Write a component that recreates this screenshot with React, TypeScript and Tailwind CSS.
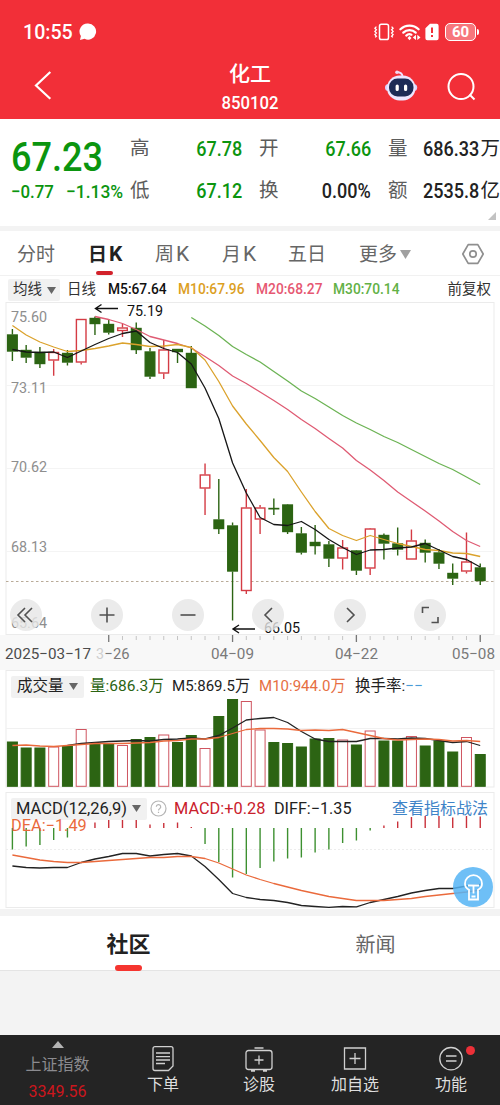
import React from 'react';

type Candle = [top: number, bottom: number, high: number, low: number, up: 0 | 1];

// Plot coordinates share one vertical space across the three panels
const STEP = 13.76;
const X0 = 12.4;
const xAt = (i: number) => X0 + i * STEP;

const candles: Candle[] = [
    [334.5, 351.5, 329, 361, 0], [350, 357.5, 345, 363, 0], [352, 364, 347, 368, 0], [352, 360.5, 349, 375.7, 1],
    [353, 362.5, 350, 365.5, 0], [319, 362.5, 319, 364.5, 1], [318, 324, 316.5, 335, 0], [324, 332.5, 319, 334.5, 0],
    [327.5, 331, 324, 337, 1], [328, 350, 322.5, 354, 0], [351.5, 376.5, 348, 379, 0], [349.5, 373.5, 340, 379, 1],
    [349, 352, 349, 363, 0], [353, 388, 346, 388, 0], [474.5, 488.5, 463.5, 515, 1], [519.5, 529, 479, 534, 0],
    [525.5, 571.5, 522.5, 620.5, 0], [507.5, 591, 489, 594, 1], [507.5, 519.5, 505, 534, 1], [508, 509, 498.5, 515, 0],
    [504.5, 532, 504, 534, 0], [533.5, 552.5, 527, 554.5, 0], [542, 546, 525, 554.5, 0], [544.5, 558.5, 541, 567, 0],
    [547.5, 558.5, 540, 569.5, 1], [550.5, 570.5, 550, 575, 0], [528.5, 568.5, 528, 575, 1], [535, 543.5, 533.5, 559.5, 0],
    [543.5, 549.5, 527.5, 555.5, 0], [540.5, 559.5, 529.5, 559.5, 1], [543, 552.5, 539.5, 562.5, 0], [552.5, 563.5, 549, 569, 0],
    [573, 578.5, 563.5, 585, 0], [561.5, 571.5, 532.5, 573.5, 1], [567.5, 581, 563.5, 585, 0],
];

const ma5 = [349.5, 352, 352.5, 352, 357.5, 351, 344.5, 338.5, 333.5, 331, 342.5, 348.5, 352.5, 364, 388, 418.5, 463, 493, 517.5, 524.5, 525.5, 521.5, 529.5, 539.5, 547.5, 554.5, 550, 549.5, 548, 547, 543.5, 550, 556.5, 559.5, 567];
const ma10 = [325.5, 335, 342, 347, 351.5, 350.5, 348.5, 346, 343, 344.5, 346.5, 346, 344.5, 347.5, 360, 381.5, 406, 424, 440.5, 457.5, 471.5, 492, 511.5, 528.5, 535.5, 540.5, 535.5, 539.5, 543.5, 546.5, 549.5, 550.5, 553, 553.5, 556.5];
const ma20 = [316.5, 319.5, 323.5, 329.5, 336.5, 340, 343.5, 348, 356.5, 365.5, 376, 383.5, 392, 400.5, 409.5, 419.5, 428.5, 438.5, 448, 460.5, 470, 480.5, 492, 501.5, 511, 521, 531.5, 540.5, 546.5];
const ma30 = [317.5, 326, 335.5, 346.5, 354.5, 362, 371.5, 381, 391, 398.5, 407, 415.5, 423, 429.5, 436.5, 442.5, 449.5, 456.5, 463.5, 469.5, 477, 484.5];

const volumes = [741.5, 747.5, 747.5, 746.5, 746, 729, 744, 744, 745, 739, 737, 734.5, 742, 735, 748, 716, 699, 701, 729.5, 742, 743, 746.5, 738.5, 738, 739.5, 744.5, 730.5, 740.5, 740.5, 736, 745.5, 740.5, 751.5, 737, 754];
const volMa5 = [745.5, 743.5, 742.5, 741.5, 741, 740.5, 741, 739.5, 739, 738, 739, 735.5, 728, 720, 718.5, 717.5, 722.5, 731.5, 739, 741.5, 741.5, 741.5, 738.5, 738.5, 739, 738, 738.5, 740.5, 742.5, 741.5, 745.5];
const volMa10 = [745.5, 745, 746, 746.5, 745.5, 744.5, 743.5, 743.5, 743.5, 743, 742.5, 741, 740.5, 739, 739, 737.5, 733.5, 729.5, 728.5, 728.5, 729, 730.5, 730, 730.5, 729.5, 732.5, 735.5, 738.5, 740, 739.5, 739, 739.5, 741, 740.5, 741.5];

const macd = [849.5, 846.5, 845, 840, 837.5, 828, 822.5, 819.5, 818, 819, 824.5, 823, 822.5, 827, 844, 862, 877.5, 874, 868, 861.5, 858.5, 857.5, 852.5, 849.5, 843, 840.5, 830.5, 825.5, 821.5, 817, 816, 816, 817.5, 816, 816.5];
const diff = [866, 867.5, 868, 867.5, 867.5, 862.5, 859, 856.5, 853.5, 853.5, 856, 854.5, 853.5, 856, 866.5, 879.5, 893.5, 897.5, 899.5, 900.5, 902.5, 905.5, 906.5, 907.3, 906.5, 906.8, 902.5, 899.5, 896.5, 893, 890.5, 888.5, 888.5, 886, 884.5];
const dea = [855, 857.5, 860, 861.5, 862.5, 862.5, 861.5, 860.5, 859.5, 858.5, 857.5, 857.5, 856.5, 856.5, 858.5, 863, 869, 875, 879.5, 883.5, 887, 890.5, 893.5, 896.5, 898.5, 900.5, 900.5, 900.5, 899.5, 898.5, 896.5, 895, 893.5, 892, 890];

const Line = ({ data, start = 0, color }: { data: number[]; start?: number; color: string }) => (
    <polyline
        points={data.map((y, i) => `${xAt(i + start).toFixed(1)},${y}`).join(' ')}
        fill="none"
        stroke={color}
        strokeWidth="1.3"
        strokeLinejoin="round"
    />
);

const Label = ({ x, y, w, size = 15.5, fill = '#8e8e8e', children }: { x: number; y: number; w: number; size?: number; fill?: string; children: string }) => (
    <text x={x} y={y} fontSize={size} fill={fill} textLength={w} lengthAdjust="spacingAndGlyphs">{children}</text>
);

function StatusBar() {
    return (
        <div className="flex h-[64px] items-center pl-[23px] pr-[21px]">
            <span className="w-[56px] origin-left scale-x-[.98] text-[20px] font-medium leading-none">10:55</span>
            <svg width="18" height="18" viewBox="0 0 18 18" fill="#fff">
                <path d="M9 .6a8 8 0 1 1-3.4 15.2L1 17l.9-4A8 8 0 0 1 9 .6Z" />
            </svg>
            <div className="ml-auto flex items-center">
                <svg width="20" height="18" viewBox="0 0 20 18" fill="none" stroke="#fff" strokeWidth="1.5">
                    <rect x="5.5" y="1.2" width="9" height="15.4" rx="1.8" />
                    <path d="M2.4 3.6 .9 5.2l1.5 1.6L.9 8.4l1.5 1.6L.9 11.6l1.5 1.6-1.2 1.2M17.6 3.6l1.5 1.6-1.5 1.6 1.5 1.6-1.5 1.6 1.5 1.6-1.5 1.6 1.2 1.2" strokeWidth="1.3" />
                </svg>
                <svg className="ml-[5px]" width="22" height="18" viewBox="0 0 22 18" fill="none" stroke="#fff" strokeWidth="2.2" strokeLinecap="round">
                    <path d="M1.4 6.3a13 13 0 0 1 18.2 0M4.3 9.6a8.8 8.8 0 0 1 12.4 0M7.3 12.6a4.6 4.6 0 0 1 5.1-.9" />
                    <path d="m10.5 13 2 2-2 2.2-2-2.2ZM17 11.8v5.2l-3.2-2.6ZM18.3 17v-5.2l3.2 2.6Z" fill="#fff" stroke="none" />
                </svg>
                <svg className="ml-[4px]" width="14" height="18" viewBox="0 0 14 18">
                    <path d="M5 .8h6.5a2 2 0 0 1 2.1 2v12.4a2 2 0 0 1-2.1 2h-9a2 2 0 0 1-2.1-2V5.3Z" fill="#fff" />
                    <path d="M7 4.5v5.5M7 12v2" stroke="#f22f38" strokeWidth="2" />
                </svg>
                <div className="ml-[6px] flex h-[18px] w-[31px] items-center justify-center rounded-[5px] border-[1.5px] border-white bg-[#f7767c]">
                    <span className="text-[15px] font-bold leading-none">60</span>
                </div>
                <div className="ml-[1px] h-[6px] w-[2px] rounded-r bg-white" />
            </div>
        </div>
    );
}

function Header() {
    return (
        <header className="h-[119px] bg-[#f22f38] text-white">
            <StatusBar />
            <div className="flex h-[55px] items-start pl-[33px] pr-[24px]">
                <svg className="mt-[6px]" width="20" height="30" viewBox="0 0 20 30" fill="none" stroke="#fff" strokeWidth="2.2">
                    <path d="M17.3 2 3 15.5 17.3 28.8" />
                </svg>
                <div className="ml-[147px] w-[100px] text-center">
                    <div className="text-[21px] font-medium leading-[20px]">化工</div>
                    <div className="mt-[9px] origin-center scale-x-[.88] text-[19px] font-medium leading-[20px]">850102</div>
                </div>
                <svg className="ml-[83px] mt-[5px]" width="36" height="32" viewBox="0 0 36 32">
                    <path d="M19.5 7.5C19.5 5 17.5 3.5 14.5 3" stroke="#efe0ff" strokeWidth="1.8" strokeLinecap="round" fill="none" />
                    <circle cx="14" cy="3.2" r="1.8" fill="#f3d8f0" />
                    <circle cx="5.5" cy="18.5" r="3.5" fill="#d9d2ff" />
                    <circle cx="30.7" cy="18.5" r="3.5" fill="#d9d2ff" />
                    <rect x="4" y="6.5" width="28.5" height="25" rx="12.5" fill="#ece6ff" />
                    <rect x="6" y="9.5" width="24.5" height="18" rx="8.5" fill="#1d2b56" />
                    <path d="M14.2 17v3.5M22.6 17v3.5" stroke="#fff" strokeWidth="3.2" strokeLinecap="round" />
                </svg>
                <svg className="ml-auto mt-[8px]" width="30" height="30" viewBox="0 0 30 30" fill="none" stroke="#fff" strokeWidth="2">
                    <circle cx="15" cy="14.5" r="12.5" />
                    <path d="m23.5 22.5 5 5" />
                </svg>
            </div>
        </header>
    );
}

const quotes = [
    { label: '高', value: '67.78', green: true },
    { label: '开', value: '67.66', green: true },
    { label: '低', value: '67.12', green: true },
    { label: '换', value: '0.00%', green: false },
];

const totals = [
    { label: '量', value: '686.33', unit: '万' },
    { label: '额', value: '2535.8', unit: '亿' },
];

function Quote() {
    return (
        <section className="relative flex h-[107px] bg-white pt-[9px]">
            <div className="w-[130px] pl-[11px] text-[#0b950f]">
                <div className="origin-left scale-x-[.88] pt-[9px] text-[41px] font-medium leading-[41px]">67.23</div>
                <div className="flex whitespace-nowrap pt-[4px] text-[18.5px] font-medium leading-[20px]">
                    <span className="w-[55px] origin-left scale-x-[.91]">−0.77</span>
                    <span className="origin-left scale-x-[.94]">−1.13%</span>
                </div>
            </div>
            <div className="grid w-[258px] grid-cols-[129px_129px] content-start">
                {quotes.map(q => (
                    <div key={q.label} className="flex h-[42px] items-center pr-[17px]">
                        <span className="text-[19.5px] leading-none text-[#5c5c5c]">{q.label}</span>
                        <span className={`ml-auto origin-right scale-x-[.88] text-[20.5px] font-medium leading-none ${q.green ? 'text-[#0b950f]' : 'text-[#222]'}`}>{q.value}</span>
                    </div>
                ))}
            </div>
            <div>
                {totals.map(t => (
                    <div key={t.label} className="flex h-[42px] w-[112px] items-center">
                        <span className="w-[36px] text-[19.5px] leading-none text-[#5c5c5c]">{t.label}</span>
                        <span className="w-[57px] origin-left scale-x-[.88] text-[20.5px] font-medium leading-none text-[#222]">{t.value}</span>
                        <span className="text-[19.5px] leading-none text-[#222]">{t.unit}</span>
                    </div>
                ))}
            </div>
            <svg className="absolute bottom-[6px] right-[4px]" width="8" height="8" viewBox="0 0 8 8">
                <path d="M8 0v8H0Z" fill="#c2c2c2" />
            </svg>
        </section>
    );
}

function PeriodTabs() {
    return (
        <nav className="flex h-[44px] items-center bg-white pl-[17px] pt-[2px] text-[19px] leading-none text-[#666]">
            <span className="w-[71px]">分时</span>
            <span className="relative flex h-full w-[67px] items-center gap-[2px] font-bold text-[#222]">
                日<span className="text-[21px]">K</span>
                <span className="absolute bottom-0 left-[8px] h-[4px] w-[17px] rounded-full bg-[#d2222b]" />
            </span>
            <span className="flex w-[67px] items-center gap-[2px]">周<span className="text-[21px]">K</span></span>
            <span className="flex w-[66px] items-center gap-[2px]">月<span className="text-[21px]">K</span></span>
            <span className="w-[71px]">五日</span>
            <span className="flex items-center gap-[3px]">
                更多
                <svg width="11" height="9" viewBox="0 0 11 9"><path d="M0 0h11L5.5 9Z" fill="#a0a0a0" /></svg>
            </span>
            <svg className="ml-auto mr-[16px]" width="22" height="22" viewBox="0 0 22 22" fill="none" stroke="#8f8f8f" strokeWidth="1.7">
                <path d="M6.2 1.6h9.6L21.2 11l-5.4 9.4H6.2L.8 11Z" strokeLinejoin="round" />
                <circle cx="11" cy="11" r="3.2" />
            </svg>
        </nav>
    );
}

function Caret() {
    return <svg width="9" height="7" viewBox="0 0 9 7"><path d="M0 0h9L4.5 7Z" fill="#666" /></svg>;
}

function AverageRow() {
    return (
        <div className="flex h-[27px] items-center whitespace-nowrap border-t border-[#f1f1f1] bg-white pl-[8px] pt-[2px] text-[14.5px] leading-none text-[#333]">
            <div className="flex h-[22px] w-[52px] items-center gap-[5px] rounded-[2px] bg-[#f1f1f1] pl-[5px]">均线<Caret /></div>
            <span className="ml-[7px] w-[41px]">日线</span>
            <span className="w-[70px] origin-left scale-x-[.95] font-medium text-[#111]">M5:67.64</span>
            <span className="w-[78px] origin-left scale-x-[.95] font-medium text-[#dca01f]">M10:67.96</span>
            <span className="w-[77px] origin-left scale-x-[.95] font-medium text-[#e65872]">M20:68.27</span>
            <span className="origin-left scale-x-[.95] font-medium text-[#62b146]">M30:70.14</span>
            <span className="ml-auto mr-[9px]">前复权</span>
        </div>
    );
}

const roundButtons = [
    { left: 'left-[10px]', d: 'M15 9 8 16l7 7M22 9l-7 7 7 7' },
    { left: 'left-[91px]', d: 'M16 8.5v15M8.5 16h15' },
    { left: 'left-[172px]', d: 'M8.5 16h15' },
    { left: 'left-[252px]', d: 'M20 9l-7 7 7 7' },
    { left: 'left-[334px]', d: 'M13 9l7 7-7 7' },
    { left: 'left-[414px]', d: 'M8.5 14V8.5H15M17.5 23.5H24V18' },
];

function PriceChart() {
    return (
        <div className="relative h-[368px]">
            <svg width="500" height="368" viewBox="0 302 500 368" fontFamily="Roboto">
                <rect x="0" y="302" width="500" height="333" fill="#fff" />
                <rect x="0" y="635" width="500" height="35" fill="#f8f8f8" />
                <rect x="6" y="302.5" width="488" height="332" fill="none" stroke="#ebebeb" />
                <path d="M6 385.5H494M6 468.5H494M6 551.5H494" stroke="#f4f4f4" />
                <path d="M6 581.5H494" stroke="#b9ab98" strokeDasharray="2.5 2.5" />
                <Label x={11} y={321.5} w={36}>75.60</Label>
                <Label x={11} y={392.5} w={36}>73.11</Label>
                <Label x={11} y={472} w={36}>70.62</Label>
                <Label x={11} y={551.5} w={36}>68.13</Label>
                <Label x={11} y={627.5} w={36}>65.64</Label>
                {candles.map(([top, bottom, high, low, up], i) => {
                    const x = xAt(i);
                    const color = up ? '#d43b44' : '#2c6413';
                    return (
                        <g key={i} stroke={color} strokeWidth="1.4">
                            <path d={`M${x} ${high}V${top}M${x} ${bottom}V${low}`} />
                            <rect x={x - 4.8} y={top + 0.5} width="9.6" height={Math.max(bottom - top - 1, 0.3)} fill={up ? '#fff' : color} />
                        </g>
                    );
                })}
                <Line data={ma30} start={13} color="#6cb354" />
                <Line data={ma20} start={6} color="#df5b73" />
                <Line data={ma10} color="#dba22c" />
                <Line data={ma5} color="#161616" />
                <path d="M118 308.5H95.5M101.5 304.5 95.5 308.5 101.5 312.5M255 629H233M239 625 233 629 239 633" stroke="#111" strokeWidth="1.4" fill="none" />
                <Label x={127} y={316} w={36} size={14} fill="#111">75.19</Label>
                <Label x={264} y={632.5} w={36} size={14} fill="#111">66.05</Label>
                {candles.map((_, i) => i > 7 && <path key={i} d={`M${xAt(i)} 636v4`} stroke="#c4c4c4" />)}
                {[7, 16, 25, 34].map(i => <path key={i} d={`M${xAt(i)} 635v7`} stroke="#777" strokeWidth="1.3" />)}
                <Label x={5} y={658.5} w={86} fill="#4c4c4c">2025−03−17</Label>
                <Label x={96} y={658.5} w={8} fill="#cfcfcf">3</Label>
                <Label x={104.5} y={658.5} w={25} fill="#7a7a7a">−26</Label>
                <Label x={211} y={658.5} w={43} fill="#7a7a7a">04−09</Label>
                <Label x={335} y={658.5} w={43} fill="#7a7a7a">04−22</Label>
                <Label x={452} y={658.5} w={43} fill="#7a7a7a">05−08</Label>
            </svg>
            {roundButtons.map(b => (
                <button key={b.left} className={`absolute top-[297px] h-[32px] w-[32px] rounded-full bg-[#e6e6e6]/80 ${b.left}`}>
                    <svg width="32" height="32" viewBox="0 0 32 32" fill="none" stroke="#505050" strokeWidth="1.6"><path d={b.d} /></svg>
                </button>
            ))}
        </div>
    );
}

function VolumePanel() {
    return (
        <div className="relative h-[120px] bg-white">
            <svg width="500" height="120" viewBox="0 670 500 120">
                <rect x="6" y="670.5" width="488" height="116.5" fill="none" stroke="#ebebeb" />
                <path d="M6 728.5H494" stroke="#f1f1f1" />
                {volumes.map((y, i) => {
                    const up = candles[i][4];
                    const color = up ? '#cf5560' : '#2c6413';
                    return <rect key={i} x={xAt(i) - 5} y={y + 0.5} width="10" height={785.8 - y} fill={up ? '#fff' : color} stroke={color} />;
                })}
                <Line data={volMa5} start={4} color="#222" />
                <Line data={volMa10} color="#ea6a3c" />
            </svg>
            <div className="absolute left-[11px] top-[5px] flex h-[22px] items-center whitespace-nowrap pt-px text-[15.5px] leading-none text-[#222]">
                <div className="mr-[6px] flex h-[22px] w-[73px] items-center gap-[5px] rounded-[2px] bg-[#f1f1f1] pl-[6px]">成交量<Caret /></div>
                <span className="w-[82px] text-[#2c6413]">量:686.3万</span>
                <span className="w-[87px] origin-left scale-x-[.97]">M5:869.5万</span>
                <span className="w-[96px] origin-left scale-x-[.97] text-[#e66f43]">M10:944.0万</span>
                <span>换手率:<span className="text-[#4a9cd8]">−−</span></span>
            </div>
        </div>
    );
}

function MacdPanel() {
    return (
        <div className="relative h-[119px] bg-white">
            <svg width="500" height="119" viewBox="0 790 500 119">
                <rect x="6" y="792.5" width="488" height="115" fill="none" stroke="#ebebeb" />
                <path d="M6 849.5H494" stroke="#ededed" strokeDasharray="2 2" />
                {macd.map((y, i) => <path key={i} d={`M${xAt(i)} 828V${y}`} stroke={y > 828 ? '#3d9030' : '#c9303a'} strokeWidth="1.4" />)}
                <Line data={diff} color="#222" />
                <Line data={dea} color="#ea6a3c" />
            </svg>
            <div className="absolute left-[11px] top-[7px] flex h-[22px] items-center whitespace-nowrap pt-px text-[16px] leading-none text-[#222]">
                <div className="flex h-[22px] w-[136px] items-center gap-[6px] rounded-[2px] bg-[#f1f1f1] pl-[5px]">
                    <span className="w-[110px] origin-left scale-x-[1.03]">MACD(12,26,9)</span><Caret />
                </div>
                <svg className="ml-[3px]" width="17" height="17" viewBox="0 0 17 17" fill="none" stroke="#b5b5b5" strokeWidth="1.2">
                    <circle cx="8.5" cy="8.5" r="7.5" />
                    <path d="M6.3 6.8a2.2 2.2 0 1 1 3.3 1.9c-.8.5-1.1.8-1.1 1.7M8.5 11.8v1.2" />
                </svg>
                <span className="ml-[7px] w-[100px] origin-left scale-x-[1.02] text-[#c9202b]">MACD:+0.28</span>
                <span className="w-[118px] origin-left scale-x-[1.01]">DIFF:−1.35</span>
                <span className="text-[#3f84c8]">查看指标战法</span>
            </div>
            <span className="absolute left-[11px] top-[28px] origin-left scale-x-[1.02] text-[16px] leading-none text-[#ea6a3c]">DEA:−1.49</span>
            <button className="absolute left-[453px] top-[77px] h-[40px] w-[40px] rounded-full bg-[#55b4f5]/85">
                <svg width="40" height="40" viewBox="0 0 40 40" fill="none" stroke="#fff" strokeWidth="1.8">
                    <path d="M16 26.5v-3.7C13.5 21.5 12 19.5 12 16.7a8.5 8.5 0 0 1 17 0c0 2.8-1.5 4.8-4 6.1v3.7M16 26v6.500h9V26M15 18.500h11M20.500 18.500v8M18.500 29.500h4" />
                </svg>
            </button>
        </div>
    );
}

function ContentTabs() {
    return (
        <div className="flex h-[55px] border-b border-[#e4e4e4] bg-white leading-none">
            <div className="relative flex w-[257px] items-center justify-center pt-[3px] text-[22px] font-bold text-[#222]">
                社区
                <span className="absolute bottom-[-1px] left-[115px] h-[6px] w-[27px] rounded-full bg-[#f5352f]" />
            </div>
            <div className="flex w-[237px] items-center justify-center pt-[3px] text-[20px] text-[#666]">新闻</div>
        </div>
    );
}

const actions = [
    { label: '下单', d: 'M6 1.7h16a2 2 0 0 1 2 2v17.3l-4.5 4.5H6a2 2 0 0 1-2-2V3.7a2 2 0 0 1 2-2ZM7 8h14M7 11.7h14M7 15h14M7 18.5h9' },
    { label: '诊股', d: 'M3.5 5.5h21a2.5 2.5 0 0 1 2.5 2.5v14a2.5 2.5 0 0 1-2.5 2.5h-21A2.5 2.5 0 0 1 1 22V8a2.5 2.5 0 0 1 2.5-2.5ZM9.5 3h9M6 26h4M18 26h4M14 10.5v9M9.5 15h9' },
    { label: '加自选', d: 'M3.5 3h21v21h-21ZM14 8v11M8.5 13.5h11' },
    { label: '功能', d: 'M14 2.5a11.2 11.2 0 1 1 0 22.4a11.2 11.2 0 0 1 0-22.4ZM9 11h10.5M9 16h10.5' },
];

function BottomBar() {
    return (
        <footer className="flex h-[70px] bg-[#242424] text-[16px] leading-none text-[#dedede]">
            <div className="flex w-[115px] flex-col items-center pt-[6px] text-[#8b8b8f]">
                <svg width="12" height="7" viewBox="0 0 12 7"><path d="M6 0l6 7H0Z" fill="#b4b4b4" /></svg>
                <span className="mt-[9px]">上证指数</span>
                <span className="mt-[11px] text-[16px] text-[#cc161d]">3349.56</span>
            </div>
            {actions.map(a => (
                <div key={a.label} className="relative flex w-[96px] flex-col items-center pt-[10px]">
                    <svg width="28" height="28" viewBox="0 0 28 28" fill="none" stroke="#d0d0d0" strokeWidth="1.3"><path d={a.d} /></svg>
                    <span className="mt-[4px]">{a.label}</span>
                    {a.label === '功能' && <span className="absolute left-[63px] top-[11px] h-[9px] w-[9px] rounded-full bg-[#ec3038]" />}
                </div>
            ))}
        </footer>
    );
}

export default function App() {
    return (
        <div className="flex h-[1105px] w-[500px] flex-col overflow-hidden bg-[#f3f3f3] font-['Roboto','Noto_Sans_CJK_SC',sans-serif]">
            <Header />
            <Quote />
            <div className="h-[5px]" />
            <PeriodTabs />
            <AverageRow />
            <PriceChart />
            <VolumePanel />
            <MacdPanel />
            <div className="h-[7px]" />
            <ContentTabs />
            <div className="flex-1" />
            <BottomBar />
        </div>
    );
}
